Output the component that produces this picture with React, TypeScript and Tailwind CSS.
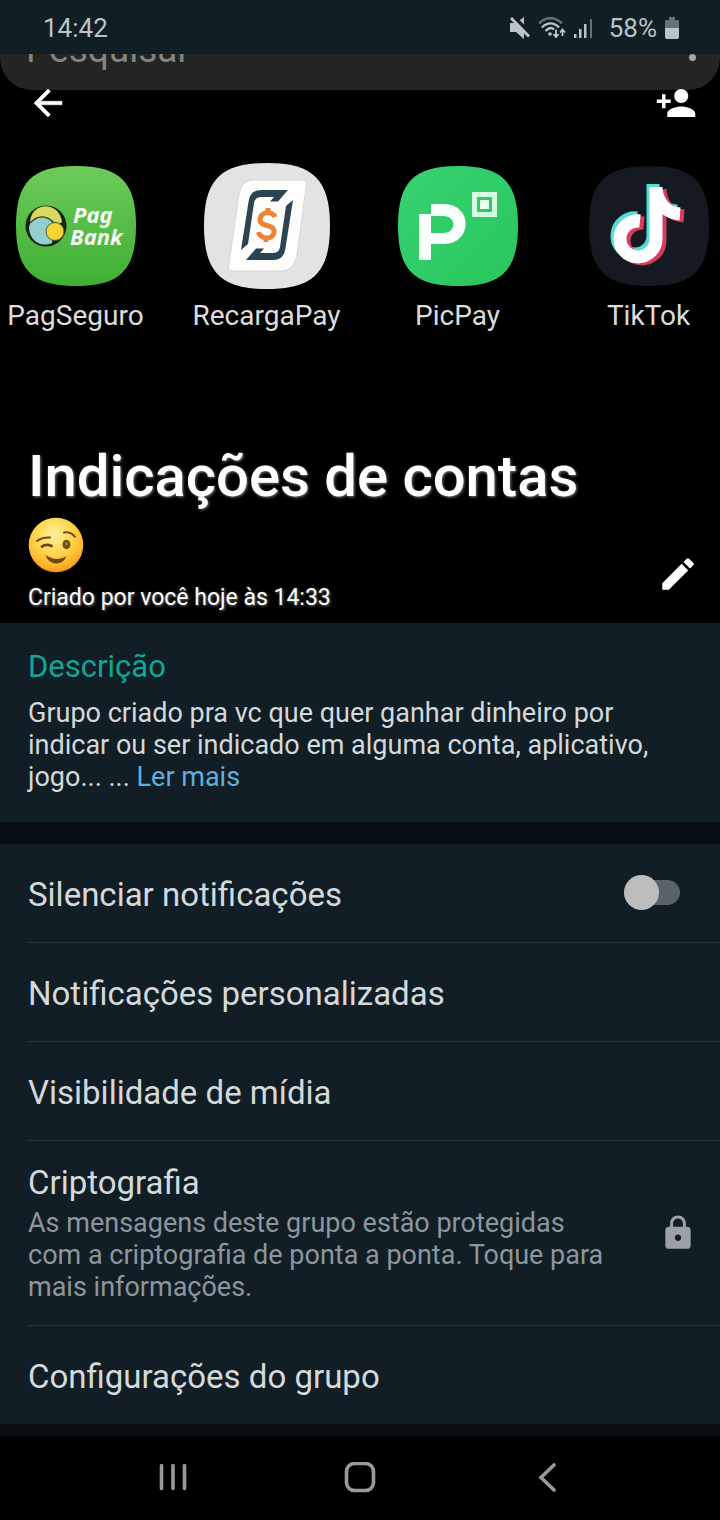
import type { ReactNode } from "react";

const SQUIRCLE =
  "M60 0C104 0 120 16 120 60S104 120 60 120 0 104 0 60 16 0 60 0Z";

function StatusBar() {
  return (
    <div className="flex h-[54px] items-center justify-between bg-[#101e26] pt-0.5 pr-[41px] pl-[43px] text-[26px] text-[#bcc4c8]">
      <span>14:42</span>
      <div className="flex items-center">
        <svg width="20" height="22" viewBox="0 0 20 22" aria-hidden="true">
          <path d="M0 6h6l8-6v22l-8-7H0Z" fill="currentColor" />
          <path d="M3 -1L22 18" stroke="#101e26" strokeWidth="3.5" />
          <path d="M1 1L19 19.500" stroke="currentColor" strokeWidth="2.800" />
        </svg>
        <svg className="ml-2" width="29" height="22" viewBox="0 0 29 22" fill="none" aria-hidden="true">
          <path d="M1 6.500C7.500 -.5 17.500 -.5 24 6.500" stroke="#66727a" strokeWidth="2.400" />
          <path d="M4 10.500C9 5 16 5 21 10.500" stroke="currentColor" strokeWidth="2.400" />
          <path d="M7.500 14C11 10.500 14 10.500 16 12.500" stroke="currentColor" strokeWidth="2.400" />
          <circle cx="12" cy="17" r="1.800" fill="currentColor" />
          <path d="M18 12.500v7M15.500 17l2.500 3 2.500-3M24.500 19v-6.500M22 15.500l2.500-3 2.500 3" stroke="currentColor" strokeWidth="1.800" />
        </svg>
        <svg className="ml-1.5" width="20" height="22" viewBox="0 0 20 22" aria-hidden="true">
          <path d="M1 17h2.500v4H1ZM6 12h2.500v9H6ZM11 7h2.500v14H11Z" fill="currentColor" />
          <path d="M17 2h2v19h-2Z" fill="#66727a" />
        </svg>
        <span className="ml-4">58%</span>
        <svg className="ml-2" width="14" height="22" viewBox="0 0 14 22" aria-hidden="true">
          <path d="M4 0h6v3h3q1 0 1 1v7H0V4q0-1 1-1h3Z" fill="#66727a" />
          <path d="M0 11h14v9q0 2-2 2H2q-2 0-2-2Z" fill="currentColor" />
        </svg>
      </div>
    </div>
  );
}

function PagBankLogo() {
  return (
    <svg width="120" height="120" viewBox="0 0 120 120" aria-hidden="true">
      <defs>
        <linearGradient id="pag" x1="0" y1="0" x2="0" y2="1">
          <stop offset="0" stopColor="#6dcb5b" />
          <stop offset="1" stopColor="#3fae33" />
        </linearGradient>
      </defs>
      <path d={SQUIRCLE} fill="url(#pag)" />
      <circle cx="30" cy="60" r="20.500" fill="#14230f" />
      <path d="M14 56C15 36 43 34 46 56L40 60H14Z" fill="#d9d860" />
      <path d="M13 61A14.500 11 0 0 1 39 56L36 77C24 82 13 74 13 61Z" fill="#94cfcf" />
      <path d="M14 57Q26 45 38 57" fill="none" stroke="#26331f" strokeWidth="1.200" />
      <circle cx="39" cy="65.500" r="9" fill="#f5d535" stroke="#5b5a1c" strokeWidth="1" />
      <g
        fill="#f6fbf4"
        fontFamily="'Noto Sans', sans-serif"
        fontSize="22"
        fontWeight="700"
        fontStyle="italic"
      >
        <text x="57" y="57">Pag</text>
        <text x="54" y="79">Bank</text>
      </g>
    </svg>
  );
}

function RecargaPayLogo() {
  const bracket =
    "M37 87L44.500 39Q46 27 57 27H84L74 38.500H66L70 34H57Q51 34 50 40L44 81Z";
  return (
    <svg className="-m-[3px]" width="126" height="126" viewBox="0 0 126 126" aria-hidden="true">
      <path d={SQUIRCLE} transform="scale(1.05)" fill="#e3e2e4" />
      <path d="M49 17H99Q103 17 102.500 21L93 92Q90 108 77 108H28Q24 108 24.500 104L35 31Q38 17 49 17Z" fill="#fdfdfb" stroke="#d8d7d8" strokeWidth="1" />
      <path d={bracket} fill="#2c4352" />
      <path d={bracket} fill="#2c4352" transform="rotate(180 63 62)" />
      <path d="M71 54C69 48 57 48 56 56C55 65 71 60 70 69C69 78 56 76 54.500 69M64 45V51M62 74V79" fill="none" stroke="#ee8433" strokeWidth="5" />
    </svg>
  );
}

function PicPayLogo() {
  return (
    <svg width="120" height="120" viewBox="0 0 120 120" aria-hidden="true">
      <defs>
        <linearGradient id="pic" x1="0" y1="0" x2="1" y2="1">
          <stop offset="0" stopColor="#38d273" />
          <stop offset="1" stopColor="#28c65c" />
        </linearGradient>
      </defs>
      <path d={SQUIRCLE} fill="url(#pic)" />
      <path d="M21 48H33V94H21Z" fill="#f8fffa" />
      <path d="M33 38H46C75 38 75 78 46 78H33V67H45C59 67 59 50 45 50H33Z" fill="#f8fffa" />
      <path d="M76.500 28.500H96.500V48.500H76.500Z" fill="none" stroke="#d8fbe3" strokeWidth="5" />
      <path d="M82 34H91V43H82Z" fill="#e9fff0" />
    </svg>
  );
}

function TikTokLogo() {
  const note = "M51 54A18 18 0 1 0 67 72V20M67 22C69 37 78 46 91 47";
  return (
    <svg width="120" height="120" viewBox="0 0 120 120" aria-hidden="true">
      <path d={SQUIRCLE} fill="#151922" />
      <g fill="none" strokeWidth="13">
        <path d={note} stroke="#55dcd5" transform="translate(-3 -2)" />
        <path d={note} stroke="#d93b5d" transform="translate(4 3)" />
        <path d={note} stroke="#fff" transform="translate(0 1)" />
      </g>
    </svg>
  );
}

const apps = [
  { name: "PagSeguro", logo: <PagBankLogo /> },
  { name: "RecargaPay", logo: <RecargaPayLogo /> },
  { name: "PicPay", logo: <PicPayLogo /> },
  { name: "TikTok", logo: <TikTokLogo /> },
];

function WinkEmoji() {
  return (
    <svg width="56" height="56" viewBox="0 0 56 56" role="img" aria-label="😉">
      <defs>
        <radialGradient id="wink" cx="0.46" cy="0.32" r="0.7">
          <stop offset="0" stopColor="#fff0a0" />
          <stop offset="0.5" stopColor="#fdd54b" />
          <stop offset="0.85" stopColor="#fbaf27" />
          <stop offset="1" stopColor="#ee8c24" />
        </radialGradient>
      </defs>
      <circle cx="28" cy="28" r="27.300" fill="url(#wink)" />
      <g fill="none" stroke="#6f4b0f" strokeLinecap="round" strokeWidth="2">
        <path d="M9 24Q14 20 22 20.500" />
        <path d="M36 15.500Q43 14.500 47 20" />
        <path d="M14 29.500Q18.500 26.500 23.500 29" strokeWidth="2.800" />
      </g>
      <ellipse cx="38.500" cy="27.500" rx="4" ry="4.700" fill="#70500f" />
      <circle cx="38.500" cy="26.500" r="1.500" fill="#a98339" />
      <path d="M17.500 38Q28 45 38.500 39.500Q35 46.500 28 46.500Q20 46 17.500 38Z" fill="#70480d" />
    </svg>
  );
}

function Hero() {
  return (
    <header className="overflow-hidden bg-black text-white">
      <div className="flex h-9 items-end justify-between overflow-hidden rounded-b-[32px] bg-[#242424] pr-6 pb-5 pl-[26px] text-[37px] leading-10 text-[#858585]">
        <span>Pesquisar</span>
        <span className="mb-[9px] size-[7px] rounded-full bg-[#a5a5a5]" />
      </div>

      <div className="-mt-2 flex justify-between pr-[23px] pl-[27px]">
        <button aria-label="Voltar" className="size-[42px]">
          <svg viewBox="0 0 24 24" fill="currentColor" stroke="currentColor" strokeWidth="0.300">
            <path d="M20 11H7.830l5.590-5.590L12 4l-8 8 8 8 1.410-1.410L7.830 13H20v-2z" />
          </svg>
        </button>
        <button aria-label="Adicionar participante" className="size-[42px]">
          <svg viewBox="0 0 24 24" fill="currentColor">
            <path d="M15 12c2.210 0 4-1.790 4-4s-1.790-4-4-4-4 1.790-4 4 1.790 4 4 4zm-9-2V7H4v3H1v2h3v3h2v-3h3v-2H6zm9 4c-2.670 0-8 1.340-8 4v2h16v-2c0-2.660-5.330-4-8-4z" />
          </svg>
        </button>
      </div>

      <div className="mt-[42px] -mr-6 -ml-5 grid grid-cols-4">
        {apps.map((app) => (
          <div key={app.name} className="flex flex-col items-center gap-3">
            {app.logo}
            <span className="text-[28px] leading-9 text-[#dcdcdc]">{app.name}</span>
          </div>
        ))}
      </div>

      <div className="mt-[106px] flex items-end justify-between pr-[21px] pb-[9px] pl-7 [text-shadow:1px_1px_3px_#777]">
        <div>
          <h1 className="text-[58px] leading-[72px] font-medium">Indicações de contas</h1>
          <div className="mt-[5px]">
            <WinkEmoji />
          </div>
          <p className="mt-[9px] text-[23px] leading-8">Criado por você hoje às 14:33</p>
        </div>
        <button aria-label="Editar" className="mb-[19px] size-[42px] shrink-0">
          <svg viewBox="0 0 24 24" fill="currentColor">
            <path d="M3 17.250V21h3.750L17.810 9.940l-3.750-3.750L3 17.250zM20.710 7.040c.39-.39.39-1.020 0-1.410l-2.340-2.340c-.39-.39-1.020-.39-1.410 0l-1.830 1.830 3.750 3.750 1.830-1.830z" />
          </svg>
        </button>
      </div>
    </header>
  );
}

function Row({ children }: { children: ReactNode }) {
  return (
    <li className="flex min-h-[99px] items-center justify-between border-b border-[#26333a] pt-1 text-[33px] leading-10 last:min-h-[98px] last:border-b-0">
      {children}
    </li>
  );
}

export default function App() {
  return (
    <div className="min-h-screen bg-black font-[Roboto,sans-serif] text-[#d5d9db]">
      <StatusBar />
      <Hero />

      <main className="bg-[#080d12] pb-3">
        <section className="bg-[#111e25] px-7 pt-6 pb-[29px]">
          <h2 className="text-[31px] leading-10 text-[#14a595]">Descrição</h2>
          <p className="mt-2.5 max-w-[640px] text-[27px] leading-8">
            Grupo criado pra vc que quer ganhar dinheiro por indicar ou ser indicado em alguma conta,
            aplicativo, jogo... ...{" "}
            <a href="#descricao" className="text-[#5fb0dc]">
              Ler mais
            </a>
          </p>
        </section>

        <ul className="mt-[22px] bg-[#111e25] pl-7">
          <Row>
            <label htmlFor="mute">Silenciar notificações</label>
            <input
              id="mute"
              type="checkbox"
              role="switch"
              className="relative mr-10 mb-1.5 h-[25px] w-14 appearance-none rounded-full bg-[#596369] before:absolute before:-top-[5px] before:left-0 before:size-[35px] before:rounded-full before:bg-[#bdbdbd] checked:before:left-[21px]"
            />
          </Row>
          <Row>Notificações personalizadas</Row>
          <Row>Visibilidade de mídia</Row>
          <Row>
            <div className="pt-[18px] pb-[22px]">
              <p>Criptografia</p>
              <p className="mt-1 max-w-[590px] text-[27px] leading-8 text-[#8d969c]">
                As mensagens deste grupo estão protegidas com a criptografia de ponta a ponta. Toque
                para mais informações.
              </p>
            </div>
            <svg
              className="mr-[23px] mb-1 size-[38px] shrink-0"
              viewBox="0 0 24 24"
              fill="#9ba1a6"
              aria-hidden="true"
            >
              <path d="M18 8h-1V6c0-2.760-2.240-5-5-5S7 3.240 7 6v2H6c-1.100 0-2 .9-2 2v10c0 1.100.9 2 2 2h12c1.100 0 2-.9 2-2V10c0-1.100-.9-2-2-2zm-6 9c-1.100 0-2-.9-2-2s.9-2 2-2 2 .9 2 2-.9 2-2 2zm3.100-9H8.900V6c0-1.710 1.390-3.100 3.100-3.100 1.710 0 3.100 1.390 3.100 3.100v2z" />
            </svg>
          </Row>
          <Row>Configurações do grupo</Row>
        </ul>
      </main>

      <nav className="grid h-[84px] grid-cols-3 place-items-center px-20 text-[#999]">
        <button aria-label="Recentes">
          <svg width="32" height="32" viewBox="0 0 32 32" stroke="currentColor" strokeWidth="3.600" strokeLinecap="round">
            <path d="M4.500 3.500V26.500M16 3.500V26.500M27.500 3.500V26.500" />
          </svg>
        </button>
        <button aria-label="Início">
          <svg width="32" height="32" viewBox="0 0 32 32" fill="none" stroke="currentColor" strokeWidth="3.600">
            <rect x="2.500" y="1.500" width="27" height="27" rx="8" />
          </svg>
        </button>
        <button aria-label="Voltar ao anterior">
          <svg width="32" height="32" viewBox="0 0 32 32" fill="none" stroke="currentColor" strokeWidth="3.600" strokeLinecap="round">
            <path d="M23 3L10 15.500L23 28" />
          </svg>
        </button>
      </nav>
    </div>
  );
}
